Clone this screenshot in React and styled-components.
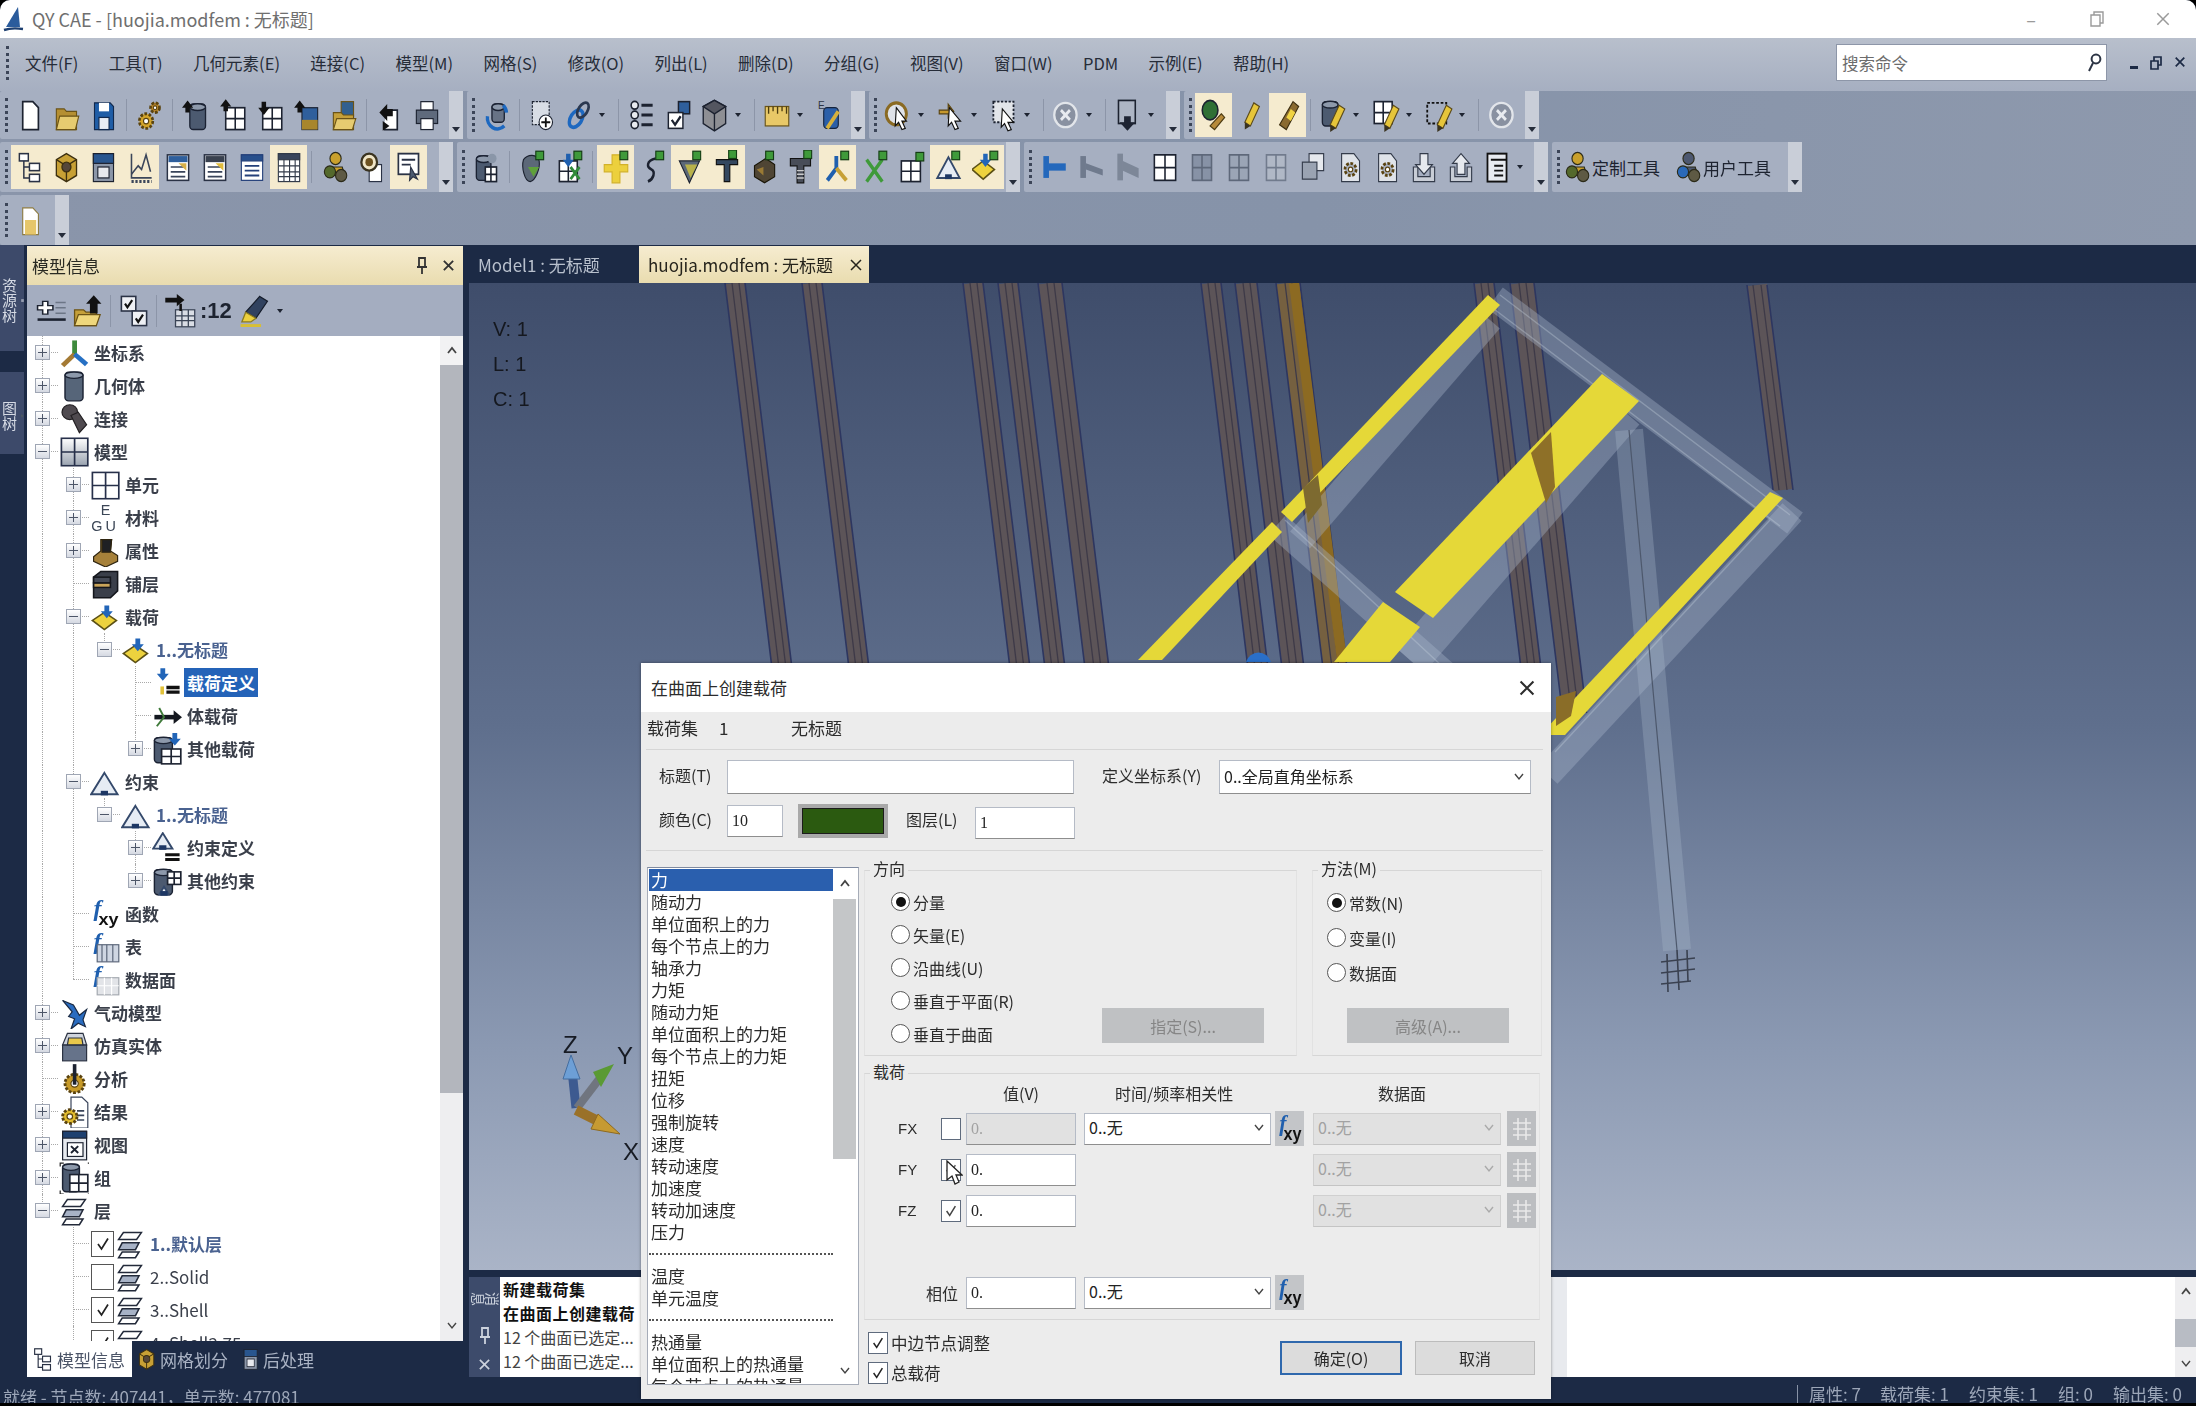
import styled, { createGlobalStyle } from 'styled-components'

const UI_FONT = '"Noto Sans CJK SC", "Liberation Sans", sans-serif'

const GlobalStyle = createGlobalStyle`
  html, body {
    margin: 0;
    padding: 0;
    background: #000;
    overflow: hidden;
  }
  body {
    font-family: ${UI_FONT};
  }
`

/* ---------- little drawing parts for the icons ---------- */

const Cyl = ({ x = 5, y = 4, w = 14, h = 21, c = '#4c5a70' }) => (
  <g stroke="#1b2233" strokeWidth="1.2">
    <rect x={x} y={y} width={w} height={h} rx="3" fill={c} />
    <ellipse cx={x + w / 2} cy={y + 2.5} rx={w / 2} ry="2.8" fill="#8d99ab" />
  </g>
)

const Cell = ({ x = 4, y = 6, w = 17, h = 18, f = '#fff', s = '#1c2230' }) => (
  <g stroke={s} strokeWidth="1.4" fill="none">
    <rect x={x} y={y} width={w} height={h} fill={f} />
    <path d={`M${x + w / 2} ${y}v${h}M${x} ${y + h / 2}h${w}`} />
  </g>
)

const Up = ({ x = 6, y = 2, c = '#111' }) => (
  <path d={`M${x} ${y}l5 6h-3v4h-4v-4h-3z`} fill={c} />
)

const Down = ({ x = 6, y = 2, c = '#111' }) => (
  <path d={`M${x - 2} ${y}h4v5h3l-5 6l-5-6h3z`} fill={c} />
)

const Pen = ({ x = 0, y = 0, c = '#e6c53a' }) => (
  <g transform={`translate(${x} ${y})`}>
    <path d="M15 4l5 3l-8 16l-5-3z" fill={c} stroke="#5b4a1a" />
    <path d="M7 20l5 3l-5 3z" fill="#3a3320" />
  </g>
)

const Badge = ({ x = 15, y = 1 }) => (
  <rect x={x} y={y} width="7" height="7" fill="#3f9a3a" stroke="#143d14" />
)

const Gear = ({ cx = 12, cy = 14, r = 6, c = '#d4a52a' }) => (
  <g>
    <circle cx={cx} cy={cy} r={r} fill={c} stroke="#5a4310" strokeWidth="2.4" strokeDasharray="2.4 1.4" />
    <circle cx={cx} cy={cy} r={r / 2.6} fill="#fff" stroke="#5a4310" />
  </g>
)

const Triangle = ({ x = 12, y = 5, s = 10 }) => (
  <g>
    <path d={`M${x} ${y}L${x + s} ${y + s * 1.7}H${x - s}z`} fill="#e6ecf4" stroke="#34496b" strokeWidth="1.6" />
    <rect x={x - 3} y={y + s * 1.7 - 3} width="6" height="4" fill="#1d3764" />
  </g>
)

const Diamond = ({ x = 12, y = 14 }) => (
  <g>
    <path d={`M${x} ${y - 7}l10 7l-10 8l-10-8z`} fill="#edd23e" stroke="#5c5116" strokeWidth="1.4" />
    <Down x={x + 2} y={y - 13} c="#2265b8" />
  </g>
)

const Sheets = ({ fill = '#a7b2c6' }) => (
  <g stroke="#232a3a" strokeWidth="1.3">
    <path d="M6 21h14l-3 5H3z" fill="#fff" />
    <path d="M6 13h14l-3 6H3z" fill={fill} />
    <path d="M7 4h15l-4 6H3z" fill="#fff" />
  </g>
)

const People = ({ a = '#c9a02c', b = '#54692c' }) => (
  <g stroke="#2b2a18">
    <circle cx="13" cy="7" r="5" fill={a} />
    <path d="M6 14h13l2 7H9z" fill={a} />
    <circle cx="8" cy="18" r="5" fill={b} />
    <circle cx="18" cy="21" r="5" fill="#5e5a44" />
  </g>
)

const Form = ({ head = '#2f5f9c', accent = '#d9b54a' }) => (
  <g>
    <rect x="3" y="4" width="19" height="21" fill="#fff" stroke="#2a3245" strokeWidth="1.3" />
    <rect x="4" y="5" width="17" height="5" fill={head} />
    <path d="M6 14h13M6 18h13M6 22h13" stroke="#39445a" strokeWidth="1.4" />
    <path d="M13 11l7 0l0 6z" fill={accent} />
  </g>
)

const FxyMark = () => (
  <text x="3" y="16" fontSize="20" fontStyle="italic" fontWeight="700" fill="#1f5fae" fontFamily='"Liberation Serif", serif'>f</text>
)

const ICONS = {
  /* first toolbar row */
  doc: <path d="M6 3h9l5 5v18H6z" fill="#fff" stroke="#1c2230" strokeWidth="1.5" />,
  folder: (
    <g stroke="#6b5316">
      <path d="M3 9h7l2 2h9v15H3z" fill="#b58f32" />
      <path d="M3 26l3-11h17l-3 11z" fill="#e6cb70" />
    </g>
  ),
  save: (
    <g>
      <path d="M4 4h14l3 3v19H4z" fill="#1f5da6" stroke="#12294d" />
      <rect x="8" y="4" width="9" height="7" fill="#fff" />
      <rect x="8" y="16" width="9" height="10" fill="#e9edf3" stroke="#12294d" />
    </g>
  ),
  gears: (
    <g>
      <Gear cx="9" cy="19" r="6" />
      <Gear cx="17" cy="8" r="4" c="#b8862a" />
    </g>
  ),
  cylUp: (
    <g>
      <Cyl x={7} y={5} w={14} h={21} />
      <Up x={5} y={2} />
    </g>
  ),
  gridUp: (
    <g>
      <Cell x={6} y={8} />
      <Up x={6} y={1} />
    </g>
  ),
  gridDown: (
    <g>
      <Cell x={6} y={8} />
      <Down x={7} y={3} />
    </g>
  ),
  cubeUp: (
    <g>
      <rect x="8" y="8" width="14" height="18" fill="#2f5f9c" stroke="#1a2233" />
      <path d="M8 18h14v8H8z" fill="#a8862c" />
      <Up x={6} y={2} />
    </g>
  ),
  folderUp: (
    <g stroke="#6b5316">
      <rect x="10" y="3" width="11" height="12" fill="#32608f" />
      <path d="M3 12h7l2 2h9v12H3z" fill="#c5a03a" />
      <path d="M3 26l3-9h17l-3 9z" fill="#e6cb70" />
    </g>
  ),
  folderArrow: (
    <g>
      <g stroke="#6b5316">
        <path d="M2 13h7l2 2h8v11H2z" fill="#c5a03a" />
        <path d="M2 26l3-9h17l-3 9z" fill="#efd77c" />
      </g>
      <path d="M17 1l6 7h-3v8h-6V8h-3z" fill="#111" />
    </g>
  ),
  swap: (
    <g>
      <path d="M9 10h10v16H7" fill="#fff" stroke="#1c2230" strokeWidth="1.5" />
      <path d="M3 12l7-7v4h5v6h-5v4z" fill="#111" />
      <path d="M6 19l6 4l-6 4z" fill="#111" />
    </g>
  ),
  print: (
    <g stroke="#1c2230">
      <rect x="7" y="3" width="11" height="7" fill="#fff" />
      <rect x="3" y="10" width="19" height="11" fill="#5f6a7c" />
      <rect x="7" y="17" width="11" height="9" fill="#fff" />
    </g>
  ),
  /* second group */
  refresh: (
    <g>
      <Cyl x={8} y={5} w={11} h={15} c="#687386" />
      <path d="M4 15a9 9 0 0 0 15 8M21 12a9 9 0 0 0-3-6" fill="none" stroke="#1d68c0" strokeWidth="3" />
    </g>
  ),
  addGrid: (
    <g>
      <rect x="3" y="3" width="15" height="19" fill="#d8dde5" stroke="#1c2230" strokeDasharray="2 1" />
      <circle cx="15" cy="20" r="6" fill="#fff" stroke="#1c2230" />
      <path d="M15 16v8M11 20h8" stroke="#111" strokeWidth="1.6" />
    </g>
  ),
  link: (
    <g fill="none">
      <ellipse cx="10" cy="17" rx="5" ry="8" transform="rotate(35 10 17)" stroke="#1d68c0" strokeWidth="3" />
      <ellipse cx="16" cy="10" rx="4" ry="7" transform="rotate(35 16 10)" stroke="#2a3850" strokeWidth="2.4" />
    </g>
  ),
  listNodes: (
    <g stroke="#1c2230" strokeWidth="1.4" fill="#e8ebf0">
      <circle cx="6" cy="6" r="3.2" />
      <circle cx="6" cy="14" r="3.2" />
      <circle cx="6" cy="22" r="3.2" />
      <path d="M12 6h10M12 14h10M12 22h10" strokeWidth="2.4" />
    </g>
  ),
  addList: (
    <g>
      <path d="M6 5h4v4h4v4h-4v4H6v-4H2V9h4z" fill="#fff" stroke="#1c2230" strokeWidth="1.2" />
      <path d="M16 6h8M16 11h8M16 16h8" stroke="#6c7686" strokeWidth="1.4" />
      <path d="M2 22h22" stroke="#1c2230" strokeWidth="2.4" />
    </g>
  ),
  checks: (
    <g stroke="#1c2230" strokeWidth="1.3">
      <rect x="12" y="3" width="10" height="10" fill="#2f5f9c" />
      <rect x="3" y="12" width="13" height="13" fill="#fff" />
      <path d="M6 18l3 4l5-7" fill="none" strokeWidth="2" />
    </g>
  ),
  checkPair: (
    <g stroke="#2a3245" strokeWidth="1.3" fill="#eef0f4">
      <rect x="2" y="2" width="12" height="12" />
      <rect x="11" y="14" width="12" height="12" />
      <path d="M5 8l2 3l4-6M14 20l2 3l4-6" fill="none" stroke="#111" strokeWidth="1.8" />
    </g>
  ),
  arrowTable: (
    <g>
      <rect x="9" y="13" width="15" height="14" fill="#d9dde5" stroke="#3a4456" />
      <path d="M14 13v14M19 13v14M9 18h15M9 22h15" stroke="#3a4456" />
      <path d="M1 3h9V0l6 5l-6 5V7H1z" fill="#111" />
      <path d="M13 8v6" stroke="#111" strokeWidth="2" />
    </g>
  ),
  marker: (
    <g>
      <path d="M17 2l6 4l-9 14l-8-5z" fill="#31425f" stroke="#151c2a" />
      <path d="M6 15l8 5l-4 3H3z" fill="#ecd03d" stroke="#8a7a20" />
      <path d="M2 26h16" stroke="#d8bf34" strokeWidth="2.4" />
    </g>
  ),
  cube: (
    <g stroke="#1c2230" strokeWidth="1.2">
      <path d="M12 2l10 5v14l-10 6l-10-6V7z" fill="#8e8f94" />
      <path d="M12 2l10 5l-10 6l-10-6z" fill="#545660" />
      <path d="M12 13v14" />
    </g>
  ),
  ruler: (
    <g>
      <rect x="2" y="7" width="21" height="16" fill="#e8c867" stroke="#6a5418" />
      <path d="M5 7v6M9 7v4M13 7v6M17 7v4M21 7v6" stroke="#4c3c10" strokeWidth="1.2" />
    </g>
  ),
  axesBlue: (
    <g>
      <rect x="6" y="8" width="13" height="17" rx="3" fill="#2b5fa8" stroke="#14233c" />
      <path d="M9 25l10-14" stroke="#d7b13c" strokeWidth="3.4" />
      <text x="1" y="9" fontSize="9" fill="#2d3444" fontFamily="Liberation Sans">E</text>
    </g>
  ),
  /* third group */
  clock: (
    <g>
      <circle cx="11" cy="13" r="9" fill="#dfe2e8" stroke="#8a6a22" strokeWidth="2.6" />
      <path d="M11 8l9 11l-4 0l3 6l-3 1l-3-6l-3 3z" fill="#fff" stroke="#111" />
    </g>
  ),
  moveCursor: (
    <g>
      <path d="M2 10h8V5l5 6l-5 5v-3H2z" fill="#c6982c" stroke="#59430f" />
      <path d="M11 8l10 11l-5 0l3 6l-3 1l-3-6l-3 3z" fill="#fff" stroke="#111" />
    </g>
  ),
  selCursor: (
    <g>
      <rect x="3" y="3" width="18" height="17" fill="#e2e5ea" stroke="#1c2230" strokeWidth="1.6" strokeDasharray="2 1.4" />
      <path d="M11 9l10 11l-5 0l3 6l-3 1l-3-6l-3 3z" fill="#fff" stroke="#111" />
    </g>
  ),
  stop: (
    <g>
      <circle cx="12" cy="14" r="10" fill="#8991a1" stroke="#e2e5ea" strokeWidth="2" />
      <path d="M8 10l8 8M16 10l-8 8" stroke="#e8ebf0" strokeWidth="2.4" />
    </g>
  ),
  pageDown: (
    <g>
      <rect x="4" y="2" width="15" height="19" fill="#adb5c4" stroke="#1c2230" strokeWidth="1.4" />
      <path d="M9 15h6v5h4l-7 7l-7-7h4z" fill="#1e2433" />
    </g>
  ),
  /* fourth group */
  ballPen: (
    <g>
      <ellipse cx="9" cy="10" rx="7" ry="8" fill="#2f6f35" stroke="#1c2230" strokeWidth="1.4" />
      <path d="M19 13l3 3l-9 10l-4-3z" fill="#b68a3a" stroke="#4b3a12" />
    </g>
  ),
  pen: <Pen />,
  brownPen: (
    <g>
      <path d="M17 3l5 4l-11 19l-6-4z" fill="#8a6a30" stroke="#3c2e10" />
      <path d="M15 9l4 3l-4 7l-4-3z" fill="#f0d343" />
    </g>
  ),
  cylPen: (
    <g>
      <Cyl x={3} y={3} w={14} h={20} />
      <Pen x={3} y={2} />
    </g>
  ),
  gridPen: (
    <g>
      <Cell x={2} y={3} w={16} h={18} />
      <Pen x={4} y={2} />
    </g>
  ),
  dashPen: (
    <g>
      <rect x="2" y="4" width="17" height="17" fill="none" stroke="#111" strokeWidth="1.6" strokeDasharray="2.4 1.6" />
      <Pen x={4} y={2} />
    </g>
  ),
  /* second row */
  tree: (
    <g stroke="#2a3245" strokeWidth="1.3" fill="#fff">
      <rect x="3" y="3" width="8" height="6" />
      <rect x="12" y="11" width="9" height="6" />
      <rect x="12" y="20" width="9" height="6" />
      <path d="M7 9v14h5M7 14h5" fill="none" />
    </g>
  ),
  goldBox: (
    <g stroke="#3d3010" strokeWidth="1.2">
      <path d="M12 3l9 5v13l-9 5l-9-5V8z" fill="#c7a035" />
      <path d="M12 13l9-5M12 13L3 8M12 13v13" fill="none" />
      <circle cx="12" cy="14" r="4" fill="#54463a" />
    </g>
  ),
  panel: (
    <g stroke="#1c2230">
      <rect x="3" y="3" width="18" height="23" fill="#8b96a8" />
      <rect x="3" y="3" width="18" height="8" fill="#29568f" />
      <rect x="7" y="14" width="10" height="9" fill="#e7e9ee" />
    </g>
  ),
  chart: (
    <g fill="none" stroke="#3b465a" strokeWidth="1.4">
      <path d="M4 3v20h18" />
      <path d="M4 20l6-7l3 3l4-12l4 14" />
      <path d="M4 26h18" strokeDasharray="2 1.5" strokeWidth="2.4" />
    </g>
  ),
  formA: <Form accent="#d7b04a" />,
  formB: <Form head="#39414f" accent="#e0bb3c" />,
  table: (
    <g stroke="#24407a">
      <rect x="3" y="4" width="19" height="21" fill="#fff" />
      <rect x="3" y="4" width="19" height="5" fill="#274f8c" />
      <path d="M6 13h13M6 17h13M6 21h13" strokeWidth="1.5" />
    </g>
  ),
  tableGrid: (
    <g stroke="#333b4a">
      <rect x="3" y="3" width="19" height="23" fill="#fff" />
      <rect x="3" y="3" width="19" height="5" fill="#39455b" />
      <path d="M8 8v18M13 8v18M18 8v18M3 13h19M3 18h19M3 22h19" strokeWidth="1" />
    </g>
  ),
  people: <People />,
  search: (
    <g>
      <rect x="10" y="12" width="11" height="14" fill="#fff" stroke="#2a3245" />
      <circle cx="10" cy="10" r="7" fill="#f0e6c8" stroke="#3a3320" strokeWidth="2" />
      <circle cx="10" cy="10" r="3.4" fill="#6d5220" />
    </g>
  ),
  note: (
    <g stroke="#2a3245">
      <rect x="3" y="3" width="18" height="17" fill="#fff" strokeWidth="1.5" />
      <path d="M6 8h12M6 12h8" strokeWidth="1.5" />
      <path d="M14 14l6 10l-4-2l-3 3z" fill="#4c5a70" />
    </g>
  ),
  cylGrid: (
    <g>
      <Cyl x={3} y={5} w={13} h={20} />
      <Cell x={11} y={14} w={10} h={12} />
      <circle cx="17" cy="7" r="4" fill="#8a96a8" />
    </g>
  ),
  blob: (
    <g>
      <path d="M4 8c4-5 12-5 14 1c1 6-3 16-8 17c-5 0-8-12-6-18z" fill="#5c6878" stroke="#1c2230" />
      <path d="M8 14l10 0l-5 8z" fill="#5fa13a" />
      <Badge x={15} y={1} />
    </g>
  ),
  gridStar: (
    <g>
      <Cell x={3} y={9} w={16} h={17} />
      <Down x={11} y={3} c="#1f5fae" />
      <path d="M13 14l8 10M21 14l-8 10" stroke="#2f8a3a" strokeWidth="2.4" />
      <Badge x={16} y={1} />
    </g>
  ),
  plus: (
    <g>
      <path d="M9 4h7v8h7v6h-7v9H9v-9H2v-6h7z" fill="#ecd03d" stroke="#d2b128" />
      <Badge x={16} y={1} />
    </g>
  ),
  curve: (
    <g>
      <path d="M15 7c-9 2-8 7-4 9s2 8-3 10" fill="none" stroke="#1c2230" strokeWidth="2.2" />
      <Badge x={15} y={1} />
    </g>
  ),
  wedge: (
    <g>
      <path d="M3 9h18l-9 18z" fill="#5c6878" stroke="#1c2230" />
      <path d="M8 12h11l-6 11z" fill="#b8b14a" />
      <Badge x={15} y={1} />
    </g>
  ),
  beamT: (
    <g>
      <path d="M3 8h19v4h-7v14H10V12H3z" fill="#33475f" stroke="#111" />
      <Badge x={14} y={0} />
    </g>
  ),
  block: (
    <g>
      <path d="M4 13l10-6l8 5v10l-9 5l-9-5z" fill="#4f4534" stroke="#1a1608" />
      <path d="M6 16l6 5v-7z" fill="#9a7a34" />
      <Badge x={14} y={1} />
    </g>
  ),
  screw: (
    <g>
      <path d="M3 7h18v6h-6v14H9V13H3z" fill="#484d58" stroke="#111" />
      <path d="M9 17h6M9 20h6M9 23h6" stroke="#ccc" strokeWidth="1.2" />
      <Badge x={15} y={0} />
    </g>
  ),
  beamY: (
    <g>
      <path d="M11 5v10l-8 10" fill="none" stroke="#1f5fae" strokeWidth="3.4" />
      <path d="M11 15l9 10" stroke="#c7a035" strokeWidth="3.4" />
      <Badge x={15} y={1} />
    </g>
  ),
  xGreen: (
    <g>
      <path d="M5 8l14 18M19 8L5 26" stroke="#3f9a3a" strokeWidth="3" />
      <Badge x={16} y={1} />
    </g>
  ),
  gridBadge: (
    <g>
      <Cell x={3} y={9} w={17} h={17} />
      <Badge x={16} y={2} />
    </g>
  ),
  triBadge: (
    <g>
      <Triangle x={12} y={6} s={10} />
      <Badge x={15} y={1} />
    </g>
  ),
  loadBadge: (
    <g>
      <Diamond x={10} y={16} />
      <Badge x={16} y={1} />
    </g>
  ),
  pinBlue: (
    <g>
      <rect x="3" y="5" width="5" height="18" fill="#2468bc" />
      <rect x="8" y="11" width="15" height="6" fill="#2468bc" />
    </g>
  ),
  pinGray: (
    <g fill="#6f7a8d">
      <rect x="3" y="5" width="5" height="18" />
      <path d="M8 11l15 5v5L8 16z" />
    </g>
  ),
  pinGray2: (
    <g fill="#7d8798">
      <rect x="3" y="3" width="5" height="22" />
      <path d="M8 9l14 6v8L8 17z" />
    </g>
  ),
  gridWhite: <Cell x={3} y={4} w={19} h={21} />,
  gridMid: <Cell x={4} y={4} w={17} h={21} f="#8792a6" s="#5e687a" />,
  gridLite: <Cell x={4} y={4} w={17} h={21} f="#9ba5b6" s="#5e687a" />,
  gridPale: <Cell x={4} y={4} w={17} h={21} f="#b0b8c6" s="#717b8d" />,
  pages: (
    <g stroke="#333b4a">
      <rect x="9" y="3" width="13" height="14" fill="#e6e9ee" />
      <rect x="3" y="10" width="13" height="14" fill="#9aa3b2" />
    </g>
  ),
  gearDoc: (
    <g>
      <path d="M5 3h11l5 6v17H5z" fill="#dfe3e9" stroke="#333b4a" />
      <Gear cx="13" cy="16" r="5" c="#aab2c0" />
    </g>
  ),
  trayDown: (
    <g>
      <path d="M3 14h4v8h11v-8h4v12H3z" fill="#c8cdd6" stroke="#333b4a" />
      <path d="M9 3h7v9h4l-7.5 8L5 12h4z" fill="#e6e9ee" stroke="#333b4a" />
    </g>
  ),
  trayUp: (
    <g>
      <path d="M3 14h4v8h11v-8h4v12H3z" fill="#c8cdd6" stroke="#333b4a" />
      <path d="M9 20h7v-9h4l-7.5-8L5 11h4z" fill="#e6e9ee" stroke="#333b4a" />
    </g>
  ),
  listDoc: (
    <g stroke="#111">
      <rect x="4" y="3" width="17" height="23" fill="#e8ebf0" strokeWidth="1.6" />
      <path d="M7 8h14M10 13h8M10 17h8M10 21h8" strokeWidth="1.6" />
    </g>
  ),
  bluePeople: <People a="#4d5870" b="#2a69b8" />,
  sticky: (
    <g>
      <path d="M6 4h9l5 5v17H6z" fill="#fff" stroke="#8c7a40" />
      <rect x="8" y="14" width="10" height="12" fill="#e6c66a" />
    </g>
  ),
  /* tree */
  axes: (
    <g fill="none" strokeWidth="4">
      <path d="M13 15V3" stroke="#3e8a3c" />
      <path d="M13 15L3 25" stroke="#a47a34" />
      <path d="M13 15l10 9" stroke="#2670c4" />
    </g>
  ),
  cyl: <Cyl x={5} y={2} w={15} h={25} c="#566579" />,
  wrench: (
    <g fill="#4f4a4f" stroke="#221f22">
      <circle cx="9" cy="8" r="6.5" />
      <path d="M10 11l6-3l7 11l-6 7z" />
    </g>
  ),
  gridShade: (
    <g>
      <defs>
        <linearGradient id="shade" x1="0" y1="0" x2="0" y2="1">
          <stop offset="0" stopColor="#fff" />
          <stop offset="1" stopColor="#9aa3b0" />
        </linearGradient>
      </defs>
      <Cell x={2} y={2} w={22} h={24} f="url(#shade)" s="#27304a" />
    </g>
  ),
  gridTree: <Cell x={2} y={3} w={22} h={23} s="#27304a" />,
  egu: (
    <g fontFamily="Liberation Sans" fontSize="12" fill="#3b4656">
      <text x="9" y="11">E</text>
      <text x="1" y="25">G</text>
      <text x="13" y="25">U</text>
    </g>
  ),
  solid: (
    <g stroke="#2f2510">
      <path d="M3 19l6-5V4h9l-1 10l6 4v5l-10 5l-10-5z" fill="#a6813a" />
      <path d="M10 4h8l-1 11h-7z" fill="#1f2024" />
    </g>
  ),
  plies: (
    <g stroke="#14161c" strokeWidth="1.3">
      <path d="M3 8l6-5h14v17l-6 6H3z" fill="#3a3f4a" />
      <rect x="3" y="13" width="14" height="4" fill="#c9a45a" />
      <rect x="3" y="8" width="14" height="5" fill="#454a56" />
    </g>
  ),
  load: <Diamond x={12} y={17} />,
  loadDef: (
    <g>
      <Down x={9} y={1} c="#2265b8" />
      <path d="M12 18h11M12 22h11" stroke="#111" strokeWidth="3" />
      <rect x="7" y="17" width="3" height="7" fill="#e2c23a" />
    </g>
  ),
  bodyLoad: (
    <g>
      <path d="M2 15h18" stroke="#14181f" strokeWidth="4" />
      <path d="M18 9l7 6l-7 6z" fill="#14181f" />
      <path d="M6 7l4 8l-6 8" fill="none" stroke="#3f7a3a" strokeWidth="1.6" />
    </g>
  ),
  otherLoad: (
    <g>
      <Cyl x={2} y={4} w={15} h={22} />
      <Cell x={8} y={14} w={16} h={13} />
      <Down x={19} y={0} c="#2265b8" />
    </g>
  ),
  tri: <Triangle x={12} y={6} s={11} />,
  triDef: (
    <g>
      <Triangle x={9} y={1} s={8} />
      <path d="M11 20h12M11 24h12" stroke="#111" strokeWidth="2.6" />
    </g>
  ),
  otherTri: (
    <g>
      <Cyl x={2} y={4} w={15} h={22} />
      <Cell x={13} y={6} w={11} h={11} />
      <Triangle x={10} y={19} s={4} />
    </g>
  ),
  fxy: (
    <g>
      <FxyMark />
      <text x="7" y="24" fontSize="15" fontWeight="700" fill="#111" fontFamily="Liberation Sans">xy</text>
    </g>
  ),
  fTable: (
    <g>
      <FxyMark />
      <rect x="6" y="12" width="18" height="15" fill="#cfd6e2" stroke="#5b6679" />
      <path d="M10 12v15M14 12v15M19 12v15" stroke="#5b6679" />
    </g>
  ),
  fData: (
    <g>
      <FxyMark />
      <rect x="6" y="12" width="18" height="15" fill="#e2e4e8" stroke="#a3a8b0" />
      <path d="M12 12v15M18 12v15M6 19h18" stroke="#fff" />
    </g>
  ),
  plane: (
    <path d="M3 3l9 4l5 9l6-5l-3 9l2 6l-6-3l-6 5l3-9l-5-2l3-4z" fill="#2a6cc0" stroke="#1a2a44" />
  ),
  drawer: (
    <g stroke="#2b3242">
      <rect x="3" y="13" width="20" height="14" fill="#66738a" />
      <path d="M7 3h13l3 10H3z" fill="#cfd4dc" />
      <path d="M8 7h11l1 6H7z" fill="#e9c84a" />
    </g>
  ),
  analysis: (
    <g>
      <Gear cx="13" cy="18" r="8" c="#c79a28" />
      <rect x="11.5" y="1" width="3" height="18" fill="#1c2230" />
    </g>
  ),
  result: (
    <g>
      <path d="M10 1h9l5 5v22H10z" fill="#fff" stroke="#39445a" />
      <path d="M15 13h6M15 17h6M15 21h6" stroke="#39445a" strokeWidth="1.5" />
      <Gear cx="9" cy="18" r="6" c="#e2bb2e" />
    </g>
  ),
  viewX: (
    <g stroke="#1c2230">
      <rect x="3" y="2" width="20" height="25" fill="#e7eaef" />
      <rect x="3" y="2" width="20" height="6" fill="#1f4170" />
      <rect x="7" y="12" width="13" height="12" fill="#fff" />
      <path d="M10 15l6 6M16 15l-6 6" strokeWidth="1.6" />
    </g>
  ),
  groupGrid: (
    <g>
      <Cyl x={3} y={2} w={14} h={24} />
      <Cell x={9} y={11} w={15} h={15} />
      <path d="M1 4V1h3M24 1h3v3M1 25v3h3M24 28h3" fill="none" stroke="#222" />
    </g>
  ),
  layers: <Sheets />,
  layersPale: <Sheets fill="#d9dde5" />,
}

const Glyph = ({ name, w = 28, h = 34 }) => (
  <svg width={w} height={h} viewBox="0 0 25 28" preserveAspectRatio="none" aria-hidden="true">
    {ICONS[name]}
  </svg>
)

/* ---------- data ---------- */

const MENU = ['文件(F)', '工具(T)', '几何元素(E)', '连接(C)', '模型(M)', '网格(S)', '修改(O)', '列出(L)', '删除(D)', '分组(G)', '视图(V)', '窗口(W)', 'PDM', '示例(E)', '帮助(H)']

const SEP = { sep: true }

const TOOLBARS = [
  [
    { width: 463, items: [{ i: 'doc' }, { i: 'folder' }, { i: 'save' }, SEP, { i: 'gears' }, SEP, { i: 'cylUp' }, { i: 'gridUp' }, { i: 'gridDown' }, { i: 'cubeUp' }, { i: 'folderUp' }, SEP, { i: 'swap' }, { i: 'print' }] },
    { width: 398, items: [{ i: 'refresh' }, SEP, { i: 'addGrid' }, { i: 'link', caret: true }, SEP, { i: 'listNodes' }, { i: 'checks' }, { i: 'cube', caret: true }, SEP, { i: 'ruler', caret: true }, { i: 'axesBlue' }] },
    { width: 311, items: [{ i: 'clock', caret: true }, { i: 'moveCursor', caret: true }, { i: 'selCursor', caret: true }, SEP, { i: 'stop', caret: true }, SEP, { i: 'pageDown', caret: true }] },
    { width: 355, items: [{ i: 'ballPen', hl: true }, { i: 'pen' }, { i: 'brownPen', hl: true }, SEP, { i: 'cylPen', caret: true }, { i: 'gridPen', caret: true }, { i: 'dashPen', caret: true }, SEP, { i: 'stop' }] },
  ],
  [
    { width: 453, items: [{ i: 'tree', hl: true }, { i: 'goldBox', hl: true }, { i: 'panel', hl: true }, { i: 'chart', hl: true }, { i: 'formA' }, { i: 'formB' }, { i: 'table' }, { i: 'tableGrid', hl: true }, SEP, { i: 'people' }, { i: 'search' }, { i: 'note', hl: true }] },
    { width: 563, items: [{ i: 'cylGrid' }, SEP, { i: 'blob' }, { i: 'gridStar' }, SEP, { i: 'plus', hl: true }, { i: 'curve' }, { i: 'wedge', hl: true }, { i: 'beamT', hl: true }, { i: 'block' }, { i: 'screw' }, { i: 'beamY', hl: true }, { i: 'xGreen' }, { i: 'gridBadge' }, { i: 'triBadge', hl: true }, { i: 'loadBadge', hl: true }] },
    { width: 524, items: [{ i: 'pinBlue' }, { i: 'pinGray' }, { i: 'pinGray2' }, { i: 'gridWhite' }, { i: 'gridMid' }, { i: 'gridLite' }, { i: 'gridPale' }, { i: 'pages' }, { i: 'gearDoc' }, { i: 'gearDoc' }, { i: 'trayDown' }, { i: 'trayUp' }, { i: 'listDoc', caret: true }] },
    { width: 250, items: [{ i: 'people', text: '定制工具' }, { i: 'bluePeople', text: '用户工具' }] },
  ],
  [{ width: 69, items: [{ i: 'sticky' }] }],
]

const TREE = [
  { level: 0, exp: '+', icon: 'axes', text: '坐标系' },
  { level: 0, exp: '+', icon: 'cyl', text: '几何体' },
  { level: 0, exp: '+', icon: 'wrench', text: '连接' },
  { level: 0, exp: '-', icon: 'gridShade', text: '模型' },
  { level: 1, exp: '+', icon: 'gridTree', text: '单元' },
  { level: 1, exp: '+', icon: 'egu', text: '材料' },
  { level: 1, exp: '+', icon: 'solid', text: '属性' },
  { level: 1, icon: 'plies', text: '铺层' },
  { level: 1, exp: '-', icon: 'load', text: '载荷' },
  { level: 2, exp: '-', icon: 'load', text: '1..无标题', active: true },
  { level: 3, icon: 'loadDef', text: '载荷定义', selected: true },
  { level: 3, icon: 'bodyLoad', text: '体载荷' },
  { level: 3, exp: '+', icon: 'otherLoad', text: '其他载荷' },
  { level: 1, exp: '-', icon: 'tri', text: '约束' },
  { level: 2, exp: '-', icon: 'tri', text: '1..无标题', active: true },
  { level: 3, exp: '+', icon: 'triDef', text: '约束定义' },
  { level: 3, exp: '+', icon: 'otherTri', text: '其他约束' },
  { level: 1, icon: 'fxy', text: '函数' },
  { level: 1, icon: 'fTable', text: '表' },
  { level: 1, icon: 'fData', text: '数据面' },
  { level: 0, exp: '+', icon: 'plane', text: '气动模型' },
  { level: 0, exp: '+', icon: 'drawer', text: '仿真实体' },
  { level: 0, icon: 'analysis', text: '分析' },
  { level: 0, exp: '+', icon: 'result', text: '结果' },
  { level: 0, exp: '+', icon: 'viewX', text: '视图' },
  { level: 0, exp: '+', icon: 'groupGrid', text: '组' },
  { level: 0, exp: '-', icon: 'layers', text: '层' },
  { level: 1, check: true, icon: 'layers', text: '1..默认层', active: true },
  { level: 1, check: false, icon: 'layers', text: '2..Solid', light: true },
  { level: 1, check: true, icon: 'layers', text: '3..Shell', light: true },
  { level: 1, check: true, icon: 'layers', text: '4..Shell2.75', light: true },
]

const hasNextSibling = (index, level) => {
  for (let j = index + 1; j < TREE.length; j++) {
    if (TREE[j].level < level) return false
    if (TREE[j].level === level) return true
  }
  return false
}

const LOAD_TYPES = ['力', '随动力', '单位面积上的力', '每个节点上的力', '轴承力', '力矩', '随动力矩', '单位面积上的力矩', '每个节点上的力矩', '扭矩', '位移', '强制旋转', '速度', '转动速度', '加速度', '转动加速度', '压力', null, '温度', '单元温度', null, '热通量', '单位面积上的热通量', '每个节点上的热通量']

const DIRECTIONS = ['分量', '矢量(E)', '沿曲线(U)', '垂直于平面(R)', '垂直于曲面']
const METHODS = ['常数(N)', '变量(I)', '数据面']

const COLUMNS = [
  { x: 735, w: 20 }, { x: 812, w: 20 }, { x: 973, w: 20 }, { x: 1008, w: 20 }, { x: 1050, w: 24 },
  { x: 1211, w: 20 }, { x: 1246, w: 22 }, { x: 1288, w: 24, orange: true }, { x: 1484, w: 20, end: 713 }, { x: 1522, w: 24, end: 713 },
]

/* ---------- shell ---------- */

const Window = styled.div`
  width: 2196px;
  height: 1403px;
  display: flex;
  flex-direction: column;
  overflow: hidden;
  position: relative;
  border-radius: 10px 10px 0 0;
  background: #1c2a45;
  filter: blur(0.55px);
`

const TitleBar = styled.div`
  height: 38px;
  flex: none;
  display: flex;
  align-items: center;
  padding-left: 3px;
  background: #fff;
  color: #6f6f6f;
  font-size: 18px;
`

const TitleText = styled.span`
  margin-left: 7px;
  flex: 1;
`

const WinButton = styled.span`
  width: 66px;
  display: flex;
  justify-content: center;
  color: #9a9a9a;
`

const MenuBar = styled.div`
  height: 53px;
  flex: none;
  box-sizing: border-box;
  padding: 0 0 4px 6px;
  display: flex;
  align-items: center;
  background: linear-gradient(#b8bfcc, #a6afc1);
`

const MenuGrip = styled.span`
  width: 2px;
  height: 34px;
  margin-right: 14px;
  border-left: 3px dotted #3c4558;
`

const MenuList = styled.div`
  display: flex;
  gap: 30.4px;
  flex: 1;
`

const MenuItem = styled.span`
  font-size: 16.5px;
  color: #262c38;
  white-space: nowrap;
`

const SearchBox = styled.div`
  width: 271px;
  height: 37px;
  box-sizing: border-box;
  display: flex;
  align-items: center;
  justify-content: space-between;
  padding: 0 4px 0 5px;
  background: #fff;
  border: 1px solid #8d96a8;
  color: #6c6c6c;
  font-size: 16.5px;
`

const MdiButtons = styled.div`
  width: 89px;
  display: flex;
  justify-content: space-around;
  padding: 0 4px 0 16px;
  box-sizing: border-box;
  color: #1c2a45;
`

const ToolArea = styled.div`
  height: 154px;
  flex: none;
  display: flex;
  flex-direction: column;
  gap: 3px;
  background: linear-gradient(100deg, #8a95aa, #8693a9 60%, #8e99ad);
`

const ToolRow = styled.div`
  display: flex;
  gap: 4px;
  height: ${({ $h }) => $h}px;
`

const ToolGroup = styled.div`
  width: ${({ $w }) => $w}px;
  flex: none;
  display: flex;
  align-items: center;
  padding-left: 11px;
  box-sizing: border-box;
  background: #a6afc1;
  border-radius: 2px;
`

const ToolGrip = styled.span`
  width: 0;
  height: 34px;
  margin-left: -6px;
  margin-right: 3px;
  border-left: 3px dotted #3c4558;
`

const ToolButton = styled.span`
  width: ${({ $wide, $caret }) => ($wide ? 'auto' : $caret ? '51px' : '37px')};
  height: 44px;
  flex: none;
  box-sizing: border-box;
  padding-left: ${({ $caret }) => ($caret ? '4px' : '0')};
  display: flex;
  align-items: center;
  justify-content: ${({ $caret }) => ($caret ? 'flex-start' : 'center')};
  gap: ${({ $caret }) => ($caret ? '2px' : '1px')};
  color: #1d2330;
  font-size: 17px;
  white-space: nowrap;
  margin-right: ${({ $wide, $caret }) => ($wide ? '14px' : $caret ? '2px' : '0')};
  background: ${({ $hl }) => ($hl ? '#f5ebcf' : 'transparent')};
`

const Caret = styled.span`
  width: 14px;
  flex: none;
  display: flex;
  justify-content: center;
  &::after {
    content: '';
    border: 3.5px solid transparent;
    border-top: 4px solid #1d2330;
    border-bottom: 0;
  }
`

const ToolSep = styled.span`
  width: 1px;
  height: 32px;
  flex: none;
  margin: 0 4px;
  background: #8c95a8;
`

const ToolEnd = styled.span`
  width: 14px;
  align-self: stretch;
  flex: none;
  margin-left: auto;
  display: flex;
  align-items: flex-end;
  justify-content: center;
  padding-bottom: 7px;
  background: #c9ced8;
  &::after {
    content: '';
    border: 4px solid transparent;
    border-top: 5px solid #252c3a;
    border-bottom: 0;
  }
`

const Workspace = styled.div`
  flex: 1;
  min-height: 0;
  display: flex;
`

const Rail = styled.div`
  width: 27px;
  flex: none;
  display: flex;
  flex-direction: column;
  gap: 21px;
`

const RailTab = styled.div`
  width: 24px;
  height: ${({ $h }) => $h}px;
  padding-top: 5px;
  box-sizing: border-box;
  display: flex;
  flex-direction: column;
  align-items: center;
  gap: 3px;
  background: #3d4a6a;
  color: #d5dae4;
  font-size: 15px;
  line-height: 18px;
  writing-mode: vertical-rl;
  white-space: nowrap;
`

const SidePanel = styled.div`
  width: 436px;
  flex: none;
  display: flex;
  flex-direction: column;
`

const PanelTitle = styled.div`
  height: 39px;
  flex: none;
  margin-top: 1px;
  display: flex;
  align-items: center;
  padding: 0 8px 0 5px;
  box-sizing: border-box;
  background: linear-gradient(#f6ecd0, #e9dcaf);
  color: #2a2a22;
  font-size: 17px;
`

const PanelName = styled.span`
  flex: 1;
`

const PanelButton = styled.span`
  margin-left: 14px;
  display: flex;
  color: #333;
`

const PanelTools = styled.div`
  height: 51px;
  flex: none;
  display: flex;
  align-items: center;
  padding-left: 5px;
  background: #a4adc0;
`

const PanelCount = styled.span`
  font-family: 'Liberation Sans', sans-serif;
  font-size: 22px;
  font-weight: 700;
  color: #1d2330;
  margin: 0 4px 0 2px;
`

const TreeBox = styled.div`
  flex: 1;
  min-height: 0;
  display: flex;
  background: #fff;
  overflow: hidden;
`

const TreeList = styled.div`
  flex: 1;
  overflow: hidden;
`

const TreeRow = styled.div`
  height: 33px;
  display: flex;
  align-items: stretch;
`

const TreeCol = styled.span`
  width: 31px;
  flex: none;
  position: relative;
  display: flex;
  align-items: center;
  justify-content: center;
  ${({ $line }) => $line && `
    &::before {
      content: '';
      position: absolute;
      left: 15px;
      top: 0;
      bottom: 0;
      border-left: 1px dotted #a9a9a9;
    }
  `}
`

const Elbow = styled(TreeCol)`
  &::after {
    content: '';
    position: absolute;
    left: 15px;
    right: 0;
    top: 16px;
    border-top: 1px dotted #a9a9a9;
  }
  &::before {
    content: '';
    position: absolute;
    left: 15px;
    top: 0;
    height: ${({ $through }) => ($through ? '33px' : '16px')};
    border-left: 1px dotted #a9a9a9;
  }
`

const Expander = styled.span`
  width: 15px;
  height: 15px;
  box-sizing: border-box;
  position: relative;
  z-index: 1;
  display: flex;
  align-items: center;
  justify-content: center;
  background: linear-gradient(#fff, #d5d9e2);
  border: 1px solid #9fa6b4;
  &::before {
    content: '';
    position: absolute;
    left: 2px;
    right: 2px;
    top: 6px;
    height: 1px;
    background: #4d5668;
  }
  ${({ $plus }) => $plus && `
    &::after {
      content: '';
      position: absolute;
      top: 2px;
      bottom: 2px;
      left: 6px;
      width: 1px;
      background: #4d5668;
    }
  `}
`

const TreeIcon = styled.span`
  width: 31px;
  flex: none;
  display: flex;
  align-items: center;
  justify-content: center;
`

const TreeCheck = styled.span`
  width: 23px;
  height: 26px;
  flex: none;
  box-sizing: border-box;
  align-self: center;
  margin-left: 2px;
  margin-right: 0;
  display: flex;
  align-items: center;
  justify-content: center;
  background: #fff;
  border: 1px solid #555;
`

const TreeLabel = styled.span`
  align-self: center;
  height: 29px;
  line-height: 29px;
  margin-left: ${({ $selected }) => ($selected ? '2px' : '0')};
  padding: ${({ $selected }) => ($selected ? '0 3px' : '0 5px')};
  font-size: 17px;
  white-space: nowrap;
  font-weight: ${({ $light }) => ($light ? 400 : 700)};
  color: ${({ $selected, $active }) => ($selected ? '#fff' : $active ? '#4a6290' : '#3a3f4a')};
  background: ${({ $selected }) => ($selected ? '#2463b8' : 'transparent')};
`

const ScrollBar = styled.div`
  width: ${({ $w }) => $w}px;
  flex: none;
  display: flex;
  flex-direction: column;
  align-items: stretch;
  background: ${({ $track }) => $track};
`

const ScrollArrow = styled.span`
  height: ${({ $h }) => $h}px;
  flex: none;
  display: flex;
  align-items: center;
  justify-content: center;
  background: ${({ $bg }) => $bg};
  color: #444;
  margin-top: ${({ $end }) => ($end ? 'auto' : '0')};
`

const ScrollThumb = styled.span`
  height: ${({ $h }) => $h}px;
  flex: none;
  margin-top: ${({ $top }) => $top || 0}px;
  background: ${({ $c }) => $c};
`

const BottomTabs = styled.div`
  height: 36px;
  flex: none;
  display: flex;
  align-items: center;
  color: #aab3c4;
  font-size: 17px;
`

const BottomTab = styled.span`
  height: ${({ $active }) => ($active ? '36px' : 'auto')};
  width: ${({ $w }) => $w}px;
  padding-left: 5px;
  box-sizing: border-box;
  flex: none;
  display: flex;
  align-items: center;
  gap: 3px;
  white-space: nowrap;
  background: ${({ $active }) => ($active ? '#fff' : 'transparent')};
  color: ${({ $active }) => ($active ? '#4c5568' : '#aab3c4')};
`

const Main = styled.div`
  flex: 1;
  min-width: 0;
  margin-left: 6px;
  display: flex;
  flex-direction: column;
`

const DocTabs = styled.div`
  height: 37px;
  flex: none;
  margin-top: 1px;
  display: flex;
  font-size: 17px;
`

const DocTab = styled.span`
  display: flex;
  align-items: center;
  justify-content: space-between;
  box-sizing: border-box;
  width: ${({ $active }) => ($active ? '230px' : '170px')};
  padding: ${({ $active }) => ($active ? '0 6px 0 9px' : '0 0 0 9px')};
  background: ${({ $active }) => ($active ? 'linear-gradient(#f6ecd0, #e9dcaf)' : 'transparent')};
  color: ${({ $active }) => ($active ? '#26241c' : '#b8c0cd')};
  white-space: nowrap;
`

const Viewport = styled.div`
  height: 987px;
  flex: none;
  position: relative;
  overflow: hidden;
  background: linear-gradient(#3f4d6b, #5f6f8d 45%, #8c9ab3 78%, #aab4c7);
`

const Scene = styled.svg`
  position: absolute;
  inset: 0;
  width: 100%;
  height: 100%;
`

const Counters = styled.div`
  position: absolute;
  left: 24px;
  top: 29px;
  font-family: 'Liberation Sans', sans-serif;
  font-size: 20px;
  line-height: 35px;
  color: #15181f;
`

const Output = styled.div`
  height: 100px;
  flex: none;
  margin-top: 7px;
  display: flex;
`

const OutputGutter = styled.div`
  width: 31px;
  flex: none;
  display: flex;
  flex-direction: column;
  align-items: center;
  justify-content: space-between;
  padding: 8px 0 6px;
  box-sizing: border-box;
  background: #3d4b6b;
  color: #ccd2dd;
`

const OutputTitle = styled.span`
  writing-mode: vertical-rl;
  transform: rotate(90deg);
  font-size: 14px;
  line-height: 16px;
`

const OutputText = styled.div`
  flex: 1;
  padding: 0 0 0 3px;
  background: linear-gradient(90deg, #fff 0 1040px, #e8eaee 1040px 1067px, #fff 1067px);
  font-size: 16px;
  line-height: 24px;
  white-space: nowrap;
`

const OutputLine = styled.div`
  color: ${({ $strong }) => ($strong ? '#111' : '#444')};
  font-weight: ${({ $strong }) => ($strong ? 700 : 400)};
  letter-spacing: ${({ $strong }) => ($strong ? '0.5px' : '0')};
`

const StatusBar = styled.div`
  height: 26px;
  flex: none;
  box-sizing: border-box;
  display: flex;
  align-items: flex-start;
  padding: 8px 0 0 3px;
  font-size: 17px;
  line-height: 24px;
  color: #9ca6b8;
  white-space: nowrap;
  overflow: hidden;
`

const StatusMain = styled.span`
  width: 1794px;
  flex: none;
`

const StatusCells = styled.div`
  display: flex;
  height: 100%;
  align-items: center;
  border-left: 1px solid #8792a6;
  padding-left: 11px;
`

const StatusCell = styled.span`
  width: ${({ $w }) => $w}px;
  flex: none;
`

/* ---------- dialog ---------- */

const Dialog = styled.div`
  position: absolute;
  left: 641px;
  top: 663px;
  width: 910px;
  height: 736px;
  display: flex;
  flex-direction: column;
  background: #ececec;
  box-shadow: 0 0 3px rgba(0, 0, 0, 0.4);
  color: #2c2c2c;
  font-size: 16px;
`

const DialogHead = styled.div`
  height: 49px;
  flex: none;
  display: flex;
  align-items: center;
  justify-content: space-between;
  padding: 0 15px 0 10px;
  background: #fff;
  font-size: 17px;
`

const SetRow = styled.div`
  height: 37px;
  flex: none;
  box-sizing: border-box;
  padding: 0 0 6px 6px;
  display: grid;
  grid-template-columns: 72px 72px auto;
  align-items: center;
  justify-content: start;
  font-size: 17px;
`

const TopFrame = styled.div`
  height: 102px;
  flex: none;
  margin: 0 8px 0 5px;
  padding: 10px 0 0 13px;
  box-sizing: border-box;
  border-top: 1px solid #d6d6d6;
  border-bottom: 1px solid #d6d6d6;
  display: flex;
  flex-direction: column;
  gap: 10px;
`

const FrameRow = styled.div`
  display: flex;
  align-items: center;
  height: 34px;
`

const FieldLabel = styled.span`
  width: ${({ $w }) => $w}px;
  margin-left: ${({ $ml }) => $ml || 0}px;
  flex: none;
  white-space: nowrap;
  padding-bottom: 5px;
`

const Field = styled.input`
  width: ${({ $w }) => $w}px;
  height: ${({ $h }) => $h || 34}px;
  flex: none;
  box-sizing: border-box;
  padding: 0 4px;
  margin-top: ${({ $mt }) => $mt || 0}px;
  border: 1px solid #b5bbc6;
  border-bottom-color: #8e8e8e;
  border-radius: 0;
  outline: none;
  font-family: 'Liberation Serif', ${UI_FONT};
  font-size: 16px;
  color: ${({ disabled }) => (disabled ? '#a2a2a2' : '#222')};
  background: ${({ disabled }) => (disabled ? '#e1e1e1' : '#fff')};
`

const Combo = styled.div`
  width: ${({ $w }) => $w}px;
  height: ${({ $h }) => $h || 34}px;
  margin-left: ${({ $ml }) => $ml || 0}px;
  flex: none;
  box-sizing: border-box;
  display: flex;
  align-items: center;
  justify-content: space-between;
  padding: 0 5px 3px 4px;
  border: 1px solid ${({ $off }) => ($off ? '#d0d0d0' : '#b5bbc6')};
  border-bottom-color: ${({ $off }) => ($off ? '#c4c4c4' : '#8e8e8e')};
  color: ${({ $off }) => ($off ? '#a2a2a2' : '#222')};
  background: ${({ $off }) => ($off ? '#e1e1e1' : '#fff')};
  white-space: nowrap;
`

const Chevron = styled.svg`
  flex: none;
  color: ${({ $off }) => ($off ? '#aaa' : '#444')};
`

const Swatch = styled.span`
  width: 90px;
  height: 34px;
  margin-left: 15px;
  padding: 4px;
  flex: none;
  box-sizing: border-box;
  background: #a9a9a9;
  display: flex;
  &::before {
    content: '';
    flex: 1;
    background: #2b5a10;
    border: 1px solid #1c1c1c;
  }
`

const DialogMain = styled.div`
  flex: 1;
  min-height: 0;
  display: flex;
  padding: 16px 8px 0 6px;
`

const LoadList = styled.div`
  width: 212px;
  height: 518px;
  flex: none;
  box-sizing: border-box;
  display: flex;
  overflow: hidden;
  padding: 1px 2px 0 1px;
  background: #fff;
  border: 1px solid #a6acb8;
  border-top-color: #7f8aa0;
`

const LoadItems = styled.div`
  width: 184px;
  flex: none;
  font-size: 17px;
  line-height: 22px;
  color: #2c2c2c;
`

const LoadItem = styled.div`
  height: 22px;
  padding-left: 2px;
  white-space: nowrap;
  color: ${({ $on }) => ($on ? '#fff' : 'inherit')};
  background: ${({ $on }) => ($on ? '#2a5fae' : 'transparent')};
`

const LoadDivider = styled.div`
  height: 22px;
  display: flex;
  align-items: center;
  &::before {
    content: '';
    flex: 1;
    border-top: 2px dotted #555;
  }
`

const RightPane = styled.div`
  margin-left: 5px;
  flex: 1;
  display: flex;
  flex-direction: column;
  min-width: 0;
`

const GroupRow = styled.div`
  display: flex;
  gap: 15px;
  margin-top: 3px;
`

const Group = styled.div`
  position: relative;
  box-sizing: border-box;
  width: ${({ $w }) => $w}px;
  height: ${({ $h }) => $h}px;
  border: 1px solid #d6d6d6;
  border-left-color: #e2e2e2;
  border-right-color: #e2e2e2;
  display: flex;
  padding: ${({ $p }) => $p};
  flex-direction: ${({ $col }) => ($col ? 'column' : 'row')};
  justify-content: space-between;
`

const Legend = styled.span`
  position: absolute;
  top: -15px;
  left: 5px;
  padding: 0 3px;
  line-height: 24px;
  background: #ececec;
  font-size: 16px;
`

const RadioColumn = styled.div`
  display: flex;
  flex-direction: column;
  flex: none;
`

const RadioRow = styled.div`
  height: ${({ $h }) => $h}px;
  flex: none;
  display: flex;
  align-items: center;
  gap: 3px;
  white-space: nowrap;
`

const Radio = styled.span`
  width: 19px;
  height: 19px;
  flex: none;
  box-sizing: border-box;
  border-radius: 50%;
  background: #fff;
  border: 1.5px solid #555;
  display: flex;
  align-items: center;
  justify-content: center;
  &::after {
    content: '';
    width: 10px;
    height: 10px;
    border-radius: 50%;
    background: ${({ $on }) => ($on ? '#111' : 'transparent')};
  }
`

const GhostButton = styled.span`
  width: 162px;
  height: 35px;
  flex: none;
  align-self: flex-end;
  display: flex;
  align-items: center;
  justify-content: center;
  background: #bfc1c3;
  color: #868686;
  font-size: 16px;
`

const LoadGroup = styled(Group)`
  margin-top: 17px;
  display: grid;
  justify-content: start;
  grid-template-columns: 76px 25px 118px 191px 38px 194px 29px;
  grid-template-rows: 24px repeat(5, 41px);
  align-items: center;
`

const ColHead = styled.span`
  grid-column: ${({ $col }) => $col};
  justify-self: start;
  margin: -6px 0 0 ${({ $ml }) => $ml || 0}px;
  white-space: nowrap;
`

const RowLabel = styled.span`
  grid-column: 1;
  padding-left: 33px;
  font-size: 15px;
  font-family: 'Liberation Sans', sans-serif;
`

const PhaseLabel = styled.span`
  grid-column: 1 / span 2;
  justify-self: end;
  padding-right: 8px;
  white-space: nowrap;
`

const CheckBox = styled.span`
  width: ${({ $s }) => $s || 20}px;
  height: ${({ $s }) => ($s ? $s + 2 : 22)}px;
  flex: none;
  position: relative;
  box-sizing: border-box;
  display: flex;
  align-items: center;
  justify-content: center;
  background: #fff;
  border: 1.5px solid #5f6b7d;
`

const CursorMark = styled.svg`
  position: absolute;
  left: 3px;
  top: 0;
  z-index: 2;
`

const FxyButton = styled.span`
  width: 29px;
  height: 35px;
  display: flex;
  align-items: center;
  justify-content: center;
  background: #c3c5c8;
`

const GridButton = styled.span`
  width: 29px;
  height: 35px;
  display: flex;
  align-items: center;
  justify-content: center;
  background: #bcbec1;
  color: #e9e9e9;
`

const DialogFoot = styled.div`
  flex: 1;
  display: flex;
  justify-content: space-between;
  padding-right: 8px;
`

const FootChecks = styled.div`
  margin-top: 12px;
  display: flex;
  flex-direction: column;
  gap: 8px;
  margin-left: 4px;
`

const CheckLine = styled.label`
  height: 22px;
  display: flex;
  align-items: center;
  gap: 3px;
  font-size: 16.5px;
`

const FootButtons = styled.div`
  margin-top: 21px;
  display: flex;
  gap: 13px;
`

const DialogButton = styled.span`
  width: ${({ $w }) => $w}px;
  height: 34px;
  box-sizing: border-box;
  display: flex;
  align-items: center;
  justify-content: center;
  background: #dcdcdc;
  border: ${({ $main }) => ($main ? '2px solid #2f68ad' : '1px solid #bcbcbc')};
  color: #2c2c2c;
`

/* ---------- small shared bits ---------- */

const ChevronDown = ({ off, size = 12 }) => (
  <Chevron $off={off} width={size} height={size} viewBox="0 0 12 12" fill="none" stroke="currentColor" strokeWidth="1.4">
    <path d="M2 4l4 5l4-5" />
  </Chevron>
)

const ChevronUp = ({ size = 12 }) => (
  <svg width={size} height={size} viewBox="0 0 12 12" fill="none" stroke="currentColor" strokeWidth="1.8">
    <path d="M2 8l4-5l4 5" />
  </svg>
)

const Tick = ({ size = 16, color = '#222' }) => (
  <svg width={size} height={size} viewBox="0 0 16 16" fill="none" stroke={color} strokeWidth="1.7">
    <path d="M3 8l3.5 5L13 2.5" />
  </svg>
)

const Cross = ({ size = 14, width = 1.5 }) => (
  <svg width={size} height={size} viewBox="0 0 14 14" fill="none" stroke="currentColor" strokeWidth={width}>
    <path d="M2 2l10 10M12 2L2 12" />
  </svg>
)

const Pin = ({ w = 12, h = 20 }) => (
  <svg width={w} height={h} viewBox="0 0 12 20" fill="none" stroke="currentColor" strokeWidth="1.8">
    <path d="M3 2h6v9H3zM1 11h10M6 11v7" />
  </svg>
)

const MeshGrid = () => (
  <svg width="20" height="24" viewBox="0 0 20 24" fill="none" stroke="currentColor" strokeWidth="1.6">
    <path d="M6 1v22M14 1v22M1 6h18M1 12h18M1 18h18" />
  </svg>
)

const Fxy = () => <Glyph name="fxy" w={27} h={33} />

function Toolbars() {
  return (
    <ToolArea>
      {TOOLBARS.map((groups, r) => (
        <ToolRow key={r} $h={r === 0 ? 48 : 50}>
          {groups.map((group, g) => (
            <ToolGroup key={g} $w={group.width}>
              <ToolGrip />
              {group.items.map((item, n) =>
                item.sep ? (
                  <ToolSep key={n} />
                ) : (
                  <ToolButton key={n} $hl={item.hl} $wide={!!item.text} $caret={item.caret}>
                    <Glyph name={item.i} />
                    {item.text}
                    {item.caret ? <Caret /> : null}
                  </ToolButton>
                )
              )}
              <ToolEnd />
            </ToolGroup>
          ))}
        </ToolRow>
      ))}
    </ToolArea>
  )
}

function ModelTree() {
  return (
    <TreeBox>
      <TreeList>
        {TREE.map((row, i) => {
          const cols = []
          for (let c = 0; c < row.level; c++) {
            cols.push(<TreeCol key={c} $line={hasNextSibling(i, c)} />)
          }
          return (
            <TreeRow key={i}>
              {cols}
              <Elbow $through={hasNextSibling(i, row.level)}>
                {row.exp ? <Expander $plus={row.exp === '+'} /> : null}
              </Elbow>
              {row.check !== undefined ? (
                <TreeCheck>{row.check ? <Tick /> : null}</TreeCheck>
              ) : null}
              <TreeIcon>
                <Glyph name={row.icon} w={30} h={32} />
              </TreeIcon>
              <TreeLabel $selected={row.selected} $active={row.active} $light={row.light}>
                {row.text}
              </TreeLabel>
            </TreeRow>
          )
        })}
      </TreeList>
      <ScrollBar $w={23} $track="#eeeef0">
        <ScrollArrow $h={29} $bg="#f2f2f3">
          <ChevronUp />
        </ScrollArrow>
        <ScrollThumb $h={728} $c="#b3b6bd" />
        <ScrollArrow $h={32} $bg="transparent" $end>
          <ChevronDown />
        </ScrollArrow>
      </ScrollBar>
    </TreeBox>
  )
}

function Triad() {
  return (
    <g>
      <path d="M576 1108L572 1070" stroke="#3d5a90" strokeWidth="9" />
      <path d="M571 1055l-8 24h17z" fill="#6d9fd6" stroke="#446d9f" />
      <path d="M577 1108L600 1078" stroke="#70757f" strokeWidth="8" />
      <path d="M614 1064l-21 8l8 15z" fill="#5a9a34" />
      <path d="M576 1110L600 1122" stroke="#9a7128" strokeWidth="10" />
      <path d="M620 1134l-22-20l-7 15z" fill="#c69a32" stroke="#8e6a20" />
      <g fontFamily="Liberation Sans" fontSize="24" fill="#171b24">
        <text x="563" y="1053">Z</text>
        <text x="617" y="1064">Y</text>
        <text x="623" y="1160">X</text>
      </g>
    </g>
  )
}

function Model() {
  const beam = { stroke: '#a8b6ca', strokeOpacity: 0.38, fill: 'none' }
  return (
    <Scene viewBox="469 283 1727 987" preserveAspectRatio="none">
      {COLUMNS.map((col) => {
        const endY = col.end || 1100
        const dx = (endY - 283) * 0.122
        const edge = (off) => `M${col.x + off} 283L${col.x + off + dx} ${endY}`
        return (
          <g key={col.x} fill="none">
            <path d={edge(0)} stroke={col.orange ? '#756040' : '#5c5458'} strokeWidth={col.w} />
            <path d={`${edge(-col.w / 2)}${edge(col.w / 2)}`} stroke="#2d3660" strokeWidth="1.6" />
            <path d={`${edge(-3)}${edge(4)}`} stroke="#3e3a48" strokeWidth="1.3" />
          </g>
        )
      })}
      <path d="M1294 283L1342 660" stroke="#8c6a22" strokeWidth="10" />
      <path d="M1757 285L1783 490" stroke="#5c5458" strokeWidth="20" />
      <path d="M1747 285L1773 490M1767 285L1793 490" stroke="#2d3660" strokeWidth="1.6" />
      <path d="M1753 285L1779 490M1761 285L1787 490" stroke="#3e3a48" strokeWidth="1.3" />

      <g {...beam} strokeWidth="26">
        <path d="M1495 298L1795 523" />
        <path d="M1277 525L1520 740" />
        <path d="M1490 320L1300 540" />
        <path d="M1792 512L1548 775" />
      </g>
      <g {...beam}>
        <path d="M1625 412L1410 660" strokeWidth="38" />
        <path d="M1629 430L1677 950" strokeWidth="28" strokeOpacity="0.32" />
      </g>
      <g stroke="#c6d0de" strokeOpacity="0.35" strokeWidth="1.4">
        <path d="M1500 295L1790 515M1490 306L1780 526" />
        <path d="M1285 520L1500 720" />
        <path d="M1770 520L1555 752" />
      </g>
      <path d="M1629 430L1677 950" stroke="#4d586c" strokeWidth="1.2" />

      <g fill="#e5d838">
        <path d="M1488 295L1500 305L1292 522L1281 512z" />
        <path d="M1272 522L1282 532L1162 660H1138z" />
        <path d="M1602 374L1639 401L1433 618L1395 592z" />
        <path d="M1383 602L1420 627L1390 662H1334z" />
        <path d="M1770 492L1783 498L1565 735H1540z" />
      </g>
      <path d="M1551 432L1531 453L1546 503L1555 487z" fill="#8e7028" />
      <path d="M1303 488L1318 475L1322 505L1308 523z" fill="#7d6a30" />
      <path d="M1556 697L1576 691L1571 716L1556 726z" fill="#8a6d28" />
      <path d="M1246 662a13 13 0 0 1 25 0z" fill="#2a6fc8" />

      <g stroke="#3a4150" strokeWidth="1.6" fill="none">
        <path d="M1661 962l34-4M1661 973l34-4M1661 984l30-3" />
        <path d="M1667 954l1 38M1677 950l2 40M1687 950l1 32" />
      </g>
      <Triad />
    </Scene>
  )
}

function LoadDialog() {
  const dataCombo = (
    <Combo $w={188} $h={32} $off>
      0..无
      <ChevronDown off />
    </Combo>
  )
  return (
    <Dialog>
      <DialogHead>
        在曲面上创建载荷
        <Cross size={18} width={1.6} />
      </DialogHead>
      <SetRow>
        <span>载荷集</span>
        <span>1</span>
        <span>无标题</span>
      </SetRow>
      <TopFrame>
        <FrameRow>
          <FieldLabel $w={68}>标题(T)</FieldLabel>
          <Field $w={347} readOnly value="" />
          <FieldLabel $w={117} $ml={28}>定义坐标系(Y)</FieldLabel>
          <Combo $w={312}>
            0..全局直角坐标系
            <ChevronDown />
          </Combo>
        </FrameRow>
        <FrameRow>
          <FieldLabel $w={68}>颜色(C)</FieldLabel>
          <Field $w={56} $h={32} readOnly value="10" />
          <Swatch />
          <FieldLabel $w={69} $ml={18}>图层(L)</FieldLabel>
          <Field $w={100} $h={32} $mt={4} readOnly value="1" />
        </FrameRow>
      </TopFrame>
      <DialogMain>
        <LoadList>
          <LoadItems>
            {LOAD_TYPES.map((item, i) =>
              item ? (
                <LoadItem key={i} $on={i === 0}>
                  {item}
                </LoadItem>
              ) : (
                <LoadDivider key={i} />
              )
            )}
          </LoadItems>
          <ScrollBar $w={23} $track="#fff">
            <ScrollArrow $h={30} $bg="#fff">
              <ChevronUp />
            </ScrollArrow>
            <ScrollThumb $h={260} $c="#c4c6c8" />
            <ScrollArrow $h={28} $bg="#fff" $end>
              <ChevronDown />
            </ScrollArrow>
          </ScrollBar>
        </LoadList>
        <RightPane>
          <GroupRow>
            <Group $w={433} $h={186} $p="14px 32px 12px 26px">
              <Legend>方向</Legend>
              <RadioColumn>
                {DIRECTIONS.map((label, i) => (
                  <RadioRow key={label} $h={33}>
                    <Radio $on={i === 0} />
                    {label}
                  </RadioRow>
                ))}
              </RadioColumn>
              <GhostButton>指定(S)...</GhostButton>
            </Group>
            <Group $w={230} $h={186} $p="14px 32px 12px 14px" $col>
              <Legend>方法(M)</Legend>
              <RadioColumn>
                {METHODS.map((label, i) => (
                  <RadioRow key={label} $h={35}>
                    <Radio $on={i === 0} />
                    {label}
                  </RadioRow>
                ))}
              </RadioColumn>
              <GhostButton>高级(A)...</GhostButton>
            </Group>
          </GroupRow>
          <LoadGroup $w={676} $h={247} $p="10px 0 0 0">
            <Legend>载荷</Legend>
            <ColHead $col="3" $ml={37}>值(V)</ColHead>
            <ColHead $col="4" $ml={31}>时间/频率相关性</ColHead>
            <ColHead $col="6 / span 2" $ml={65}>数据面</ColHead>

            <RowLabel>FX</RowLabel>
            <CheckBox />
            <Field $w={110} $h={32} disabled value="0." readOnly />
            <Combo $w={187} $h={32}>0..无<ChevronDown /></Combo>
            <FxyButton><Fxy /></FxyButton>
            {dataCombo}
            <GridButton><MeshGrid /></GridButton>

            <RowLabel>FY</RowLabel>
            <CheckBox>
              <Tick size={14} color="#666" />
              <CursorMark width="18" height="27" viewBox="0 0 18 27">
                <path d="M2 1v19l5-4l3 8l4-2l-3-7h6z" fill="#fff" stroke="#222" strokeWidth="1.3" />
              </CursorMark>
            </CheckBox>
            <Field $w={110} $h={32} value="0." readOnly />
            <span />
            <span />
            {dataCombo}
            <GridButton><MeshGrid /></GridButton>

            <RowLabel>FZ</RowLabel>
            <CheckBox><Tick size={14} color="#444" /></CheckBox>
            <Field $w={110} $h={32} value="0." readOnly />
            <span />
            <span />
            {dataCombo}
            <GridButton><MeshGrid /></GridButton>

            <span />
            <span />
            <span />
            <span />
            <span />
            <span />
            <span />

            <PhaseLabel>相位</PhaseLabel>
            <Field $w={110} $h={32} value="0." readOnly />
            <Combo $w={187} $h={32}>0..无<ChevronDown /></Combo>
            <FxyButton><Fxy /></FxyButton>
          </LoadGroup>
          <DialogFoot>
            <FootChecks>
              <CheckLine>
                <CheckBox><Tick size={14} /></CheckBox>
                中边节点调整
              </CheckLine>
              <CheckLine>
                <CheckBox><Tick size={14} /></CheckBox>
                总载荷
              </CheckLine>
            </FootChecks>
            <FootButtons>
              <DialogButton $w={122} $main>确定(O)</DialogButton>
              <DialogButton $w={120}>取消</DialogButton>
            </FootButtons>
          </DialogFoot>
        </RightPane>
      </DialogMain>
    </Dialog>
  )
}

export default function App() {
  return (
    <>
      <GlobalStyle />
      <Window>
        <TitleBar>
          <svg width="22" height="26" viewBox="0 0 22 26" aria-hidden="true">
            <path d="M15 1L3 21h14z" fill="#2b5c9c" />
            <path d="M1 24c6-2 12-2 19-1" stroke="#1d3f70" strokeWidth="2.4" fill="none" />
          </svg>
          <TitleText>QY CAE - [huojia.modfem : 无标题]</TitleText>
          <WinButton>–</WinButton>
          <WinButton>
            <svg width="14" height="16" viewBox="0 0 14 16" fill="none" stroke="currentColor" strokeWidth="1.4">
              <path d="M1 4h9v11H1zM4 4V1h9v11h-3" />
            </svg>
          </WinButton>
          <WinButton>
            <Cross size={16} width={1.3} />
          </WinButton>
        </TitleBar>

        <MenuBar>
          <MenuGrip />
          <MenuList>
            {MENU.map((item) => (
              <MenuItem key={item}>{item}</MenuItem>
            ))}
          </MenuList>
          <SearchBox>
            搜索命令
            <svg width="16" height="20" viewBox="0 0 16 20" fill="none" stroke="#2c3444" strokeWidth="2">
              <circle cx="10" cy="6" r="4.4" />
              <path d="M7 10L3 18" />
            </svg>
          </SearchBox>
          <MdiButtons>
            <svg width="10" height="14" viewBox="0 0 10 14"><rect x="1" y="10" width="8" height="3" fill="#1c2a45" /></svg>
            <svg width="12" height="14" viewBox="0 0 12 14" fill="none" stroke="#1c2a45" strokeWidth="1.7"><path d="M1 5h7v8H1zM4 5V1h7v8H8" /></svg>
            <Cross size={12} width={2} />
          </MdiButtons>
        </MenuBar>

        <Toolbars />

        <Workspace>
          <Rail>
            <RailTab $h={106}>
              <svg width="16" height="18" viewBox="0 0 16 18" fill="#d5dae4"><rect x="1" y="1" width="14" height="3" /><rect x="1" y="6" width="14" height="3" /><rect x="1" y="11" width="14" height="3" /></svg>
              资源树
            </RailTab>
            <RailTab $h={82}>
              <svg width="16" height="18" viewBox="0 0 16 18" fill="none" stroke="#6d7a4a" strokeWidth="1.6"><path d="M1 2v14M1 4l10 4l-5 8" /></svg>
              图树
            </RailTab>
          </Rail>

          <SidePanel>
            <PanelTitle>
              <PanelName>模型信息</PanelName>
              <PanelButton><Pin /></PanelButton>
              <PanelButton><Cross size={13} width={2} /></PanelButton>
            </PanelTitle>
            <PanelTools>
              <ToolButton><Glyph name="addList" w={32} h={30} /></ToolButton>
              <ToolButton><Glyph name="folderArrow" w={32} h={34} /></ToolButton>
              <ToolSep />
              <ToolButton><Glyph name="checkPair" w={30} h={34} /></ToolButton>
              <ToolSep />
              <ToolButton><Glyph name="arrowTable" w={32} h={34} /></ToolButton>
              <PanelCount>:12</PanelCount>
              <ToolButton><Glyph name="marker" w={32} h={34} /></ToolButton>
              <Caret />
            </PanelTools>
            <ModelTree />
            <BottomTabs>
              <BottomTab $active $w={105}>
                <Glyph name="tree" w={22} h={26} />
                模型信息
              </BottomTab>
              <BottomTab $w={105}>
                <Glyph name="goldBox" w={20} h={24} />
                网格划分
              </BottomTab>
              <BottomTab $w={100}>
                <Glyph name="panel" w={18} h={24} />
                后处理
              </BottomTab>
            </BottomTabs>
          </SidePanel>

          <Main>
            <DocTabs>
              <DocTab>Model1 : 无标题</DocTab>
              <DocTab $active>
                huojia.modfem : 无标题
                <Cross size={14} width={1.5} />
              </DocTab>
            </DocTabs>
            <Viewport>
              <Model />
              <Counters>
                <div>V: 1</div>
                <div>L: 1</div>
                <div>C: 1</div>
              </Counters>
            </Viewport>
            <Output>
              <OutputGutter>
                <OutputTitle>消息</OutputTitle>
                <Pin w={12} h={20} />
                <Cross size={13} width={1.8} />
              </OutputGutter>
              <OutputText>
                <OutputLine $strong>新建载荷集</OutputLine>
                <OutputLine $strong>在曲面上创建载荷</OutputLine>
                <OutputLine>12 个曲面已选定...</OutputLine>
                <OutputLine>12 个曲面已选定...</OutputLine>
              </OutputText>
              <ScrollBar $w={21} $track="#eeeef0">
                <ScrollArrow $h={30} $bg="#eeeef0"><ChevronUp /></ScrollArrow>
                <ScrollThumb $h={28} $top={12} $c="#b8bcc4" />
                <ScrollArrow $h={28} $bg="#eeeef0" $end><ChevronDown /></ScrollArrow>
              </ScrollBar>
            </Output>
          </Main>
        </Workspace>

        <StatusBar>
          <StatusMain>就绪 - 节点数: 407441，单元数: 477081</StatusMain>
          <StatusCells>
            <StatusCell $w={71}>属性: 7</StatusCell>
            <StatusCell $w={89}>载荷集: 1</StatusCell>
            <StatusCell $w={89}>约束集: 1</StatusCell>
            <StatusCell $w={55}>组: 0</StatusCell>
            <StatusCell $w={80}>输出集: 0</StatusCell>
          </StatusCells>
        </StatusBar>

        <LoadDialog />
      </Window>
    </>
  )
}
